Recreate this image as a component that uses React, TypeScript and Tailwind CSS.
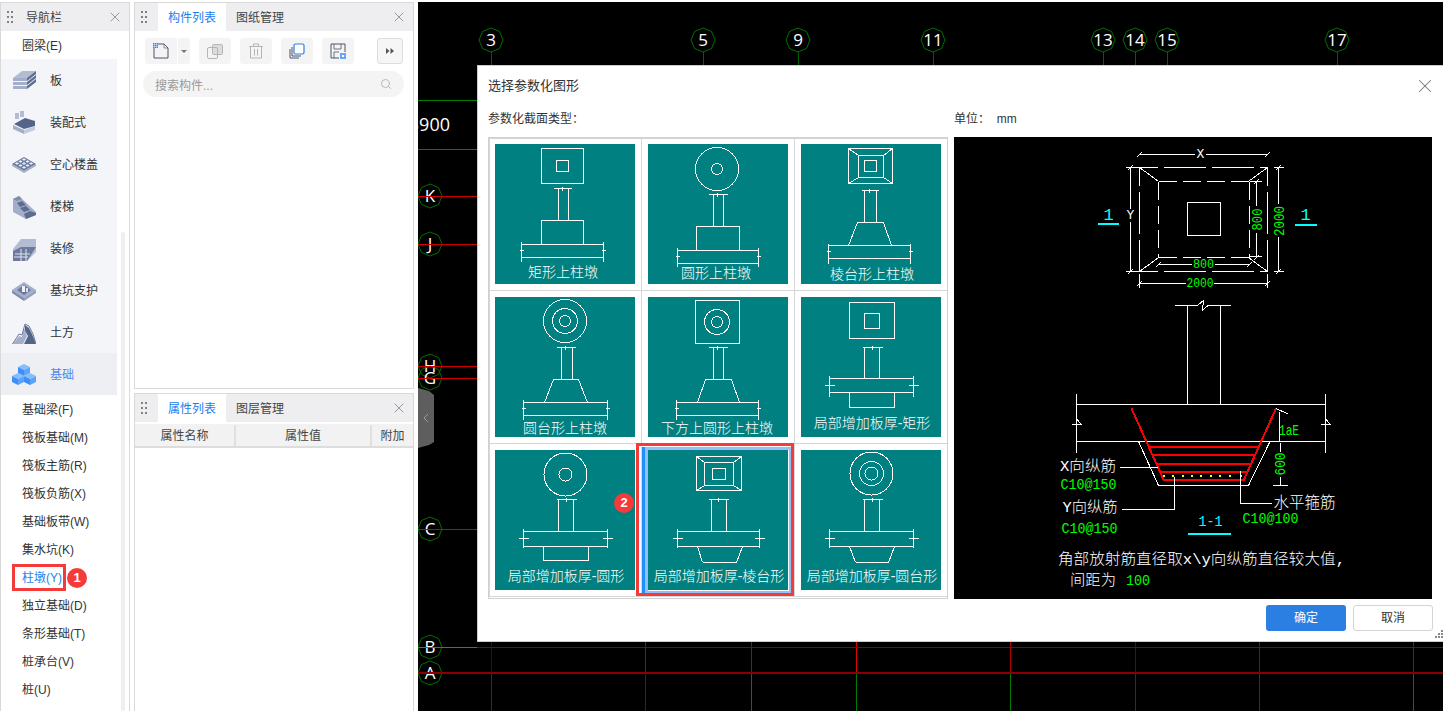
import type { ReactNode } from "react"
import { X, Search } from "lucide-react"

const px = (v: number) => Math.floor(v) + 0.5

function Ln({ a, b, c, d }: { a: number; b: number; c: number; d: number }) {
  return <line x1={px(a)} y1={px(b)} x2={px(c)} y2={px(d)} />
}

function Box({ l, t, r, b }: { l: number; t: number; r: number; b: number }) {
  return <rect x={px(l)} y={px(t)} width={Math.round(r - l)} height={Math.round(b - t)} />
}

function DragDots() {
  return (
    <div className="grid w-[6px] grid-cols-2 gap-x-[2px] gap-y-[3px]">
      {[0, 1, 2, 3, 4, 5].map((i) => (
        <span key={i} className="h-[2px] w-[2px] bg-[#808080]" />
      ))}
    </div>
  )
}

function cube(cx: number, cy: number, s: number) {
  return (
    <g key={`${cx}-${cy}`}>
      <polygon points={`${cx},${cy - s} ${cx + s},${cy - s / 2} ${cx},${cy} ${cx - s},${cy - s / 2}`} fill="#86bdfd" />
      <polygon points={`${cx - s},${cy - s / 2} ${cx},${cy} ${cx},${cy + s} ${cx - s},${cy + s / 2}`} fill="#3b8ff5" />
      <polygon points={`${cx + s},${cy - s / 2} ${cx},${cy} ${cx},${cy + s} ${cx + s},${cy + s / 2}`} fill="#5ba4fa" />
    </g>
  )
}

const navIcons: Record<string, ReactNode> = {
  板: (
    <>
      <polygon points="1,9 10,2 24,2 15,9" fill="#b3bcd3" />
      <rect x="1" y="9" width="14" height="3" fill="#a3aec9" />
      <rect x="1" y="13" width="14" height="3" fill="#a3aec9" />
      <rect x="1" y="17" width="14" height="3" fill="#a3aec9" />
      <polygon points="15,9 24,2 24,5 15,12" fill="#5d6c90" />
      <polygon points="15,13 24,6 24,9 15,16" fill="#5d6c90" />
      <polygon points="15,17 24,10 24,13 15,20" fill="#5d6c90" />
    </>
  ),
  装配式: (
    <>
      <rect x="3" y="2" width="4" height="6" fill="#b3bcd3" />
      <rect x="8" y="0" width="4" height="6" fill="#b3bcd3" />
      <polygon points="2,13 13,7 23,10 23,15 12,18" fill="#55658a" />
      <polygon points="1,14 12,19 12,23 1,18" fill="#a3aec9" />
      <polygon points="23,15 12,19 12,23 23,19" fill="#c4cbde" />
    </>
  ),
  空心楼盖: (
    <>
      <polygon points="0,11 12,4 24,11 12,18" fill="#6b7a9c" />
      <polygon points="0,11 12,18 12,20 0,13" fill="#a3aec9" />
      <polygon points="24,11 12,18 12,20 24,13" fill="#a3aec9" />
      {[
        [12, 6.5],
        [8.5, 8.5],
        [15.5, 8.5],
        [5, 10.5],
        [12, 10.5],
        [19, 10.5],
        [8.5, 12.5],
        [15.5, 12.5],
        [12, 14.5],
      ].map(([x, y]) => (
        <polygon key={`${x}-${y}`} points={`${x},${y - 1.2} ${x + 2.2},${y} ${x},${y + 1.2} ${x - 2.2},${y}`} fill="#eef0f6" />
      ))}
    </>
  ),
  楼梯: (
    <>
      <polygon points="1,4 7,1 24,17 24,20 14,24 1,17" fill="#a3aec9" />
      <polygon points="7,1 10,4 5,6 1,4" fill="#7f8cad" />
      <polygon points="10,6 14,10 8,12 5,8" fill="#5d6c90" />
      <polygon points="14,11 18,15 12,17 8,13" fill="#5d6c90" />
      <polygon points="18,16 24,18 24,20 14,24 12,19" fill="#5d6c90" />
    </>
  ),
  装修: (
    <>
      <polygon points="1,12 9,2 24,2 24,15 15,24 1,24" fill="#b3bcd3" />
      <polygon points="1,14 9,10 24,10 15,24 1,24" fill="#6b7a9c" />
      <path d="M3 17H18M2 20H16M9 12V24M14 12V24" stroke="#dfe3ee" strokeWidth="1" />
    </>
  ),
  基坑支护: (
    <>
      <polygon points="0,11 12,3 24,11 12,19" fill="#a3aec9" />
      <polygon points="0,11 12,19 12,22 0,14" fill="#7f8cad" />
      <polygon points="24,11 12,19 12,22 24,14" fill="#939fbc" />
      <polygon points="5,11 12,6 19,11 12,16" fill="#6b7a9c" />
      <rect x="10" y="7" width="3" height="6" fill="#eef0f6" />
      <rect x="14" y="9" width="2" height="4" fill="#dfe3ee" />
    </>
  ),
  土方: (
    <>
      <polygon points="13,4 17,7 20,13 24,23 12,23 16,15 13,10" fill="#55658a" />
      <polygon points="1,23 7,15 10,16 12,7 15,15 11,23" fill="#a3aec9" />
      <path d="M0.5 23 L7 13 L10 14 L13 3 L17 5 L21 13 L24 23" fill="none" stroke="#6b7a9c" strokeWidth="1" />
    </>
  ),
  基础: (
    <>
      {cube(12, 7, 6)}
      {cube(6, 16, 6)}
      {cube(18, 16, 6)}
    </>
  ),
}

const categories = ["板", "装配式", "空心楼盖", "楼梯", "装修", "基坑支护", "土方", "基础"]
const subItems = [
  "基础梁(F)",
  "筏板基础(M)",
  "筏板主筋(R)",
  "筏板负筋(X)",
  "基础板带(W)",
  "集水坑(K)",
  "柱墩(Y)",
  "独立基础(D)",
  "条形基础(T)",
  "桩承台(V)",
  "桩(U)",
]

function Badge({ n, className }: { n: number; className: string }) {
  return (
    <span className={`absolute flex h-[20px] w-[20px] items-center justify-center rounded-full bg-[#f53a3a] text-[13px] font-bold text-white ${className}`}>
      {n}
    </span>
  )
}

function NavPanel() {
  return (
    <aside className="relative flex w-[130px] shrink-0 flex-col overflow-hidden border border-b-0 border-[#d9d9d9] bg-white">
      <div className="flex h-[28px] shrink-0 items-center bg-[#eeeef0] pl-[6px] text-[#444]">
        <DragDots />
        <span className="ml-[13px] pt-[2px]">导航栏</span>
        <X size={16} strokeWidth={1.5} className="ml-auto mr-[6px] text-[#999]" />
      </div>
      <div className="flex h-[28px] shrink-0 items-center pl-[21px] pt-[2px] text-[#333]">圈梁(E)</div>
      <div className="w-[116px] bg-[#f4f5f9]">
        {categories.map((c) => (
          <div key={c} className={`flex h-[42px] items-center pl-[11px] pt-[2px] ${c === "基础" ? "bg-[#eeeff3] text-[#4f86ef]" : "text-[#333]"}`}>
            <svg viewBox="0 0 24 24" className="h-[24px] w-[24px]">
              {navIcons[c]}
            </svg>
            <span className="ml-[14px]">{c}</span>
          </div>
        ))}
      </div>
      <div className="mt-px">
        {subItems.map((s) => (
          <div key={s} className={`relative flex h-[28px] items-center pl-[21px] ${s === "柱墩(Y)" ? "text-[#1a86f0]" : "text-[#333]"}`}>
            {s}
            {s === "柱墩(Y)" && (
              <>
                <span className="absolute left-[11px] top-0 h-[27px] w-[54px] border-[3px] border-[#f53a3a]" />
                <Badge n={1} className="left-[66px] top-[4px]" />
              </>
            )}
          </div>
        ))}
      </div>
      <div className="absolute bottom-0 left-[120px] top-[229px] w-[4px] rounded-sm bg-[#efefef]" />
    </aside>
  )
}

function PanelHeader({ tabs }: { tabs: [string, string] }) {
  return (
    <div className="flex h-[28px] shrink-0 items-center bg-[#eeeef0] pl-[6px]">
      <DragDots />
      <div className="ml-[11px] flex h-full w-[68px] items-center justify-center bg-white pt-[2px] text-[#1a80f0]">{tabs[0]}</div>
      <span className="ml-[10px] pt-[2px] text-[#444]">{tabs[1]}</span>
      <X size={16} strokeWidth={1.5} className="ml-auto mr-[6px] text-[#999]" />
    </div>
  )
}

function ToolButton({ children, className = "" }: { children: ReactNode; className?: string }) {
  return <div className={`flex h-[26px] w-[32px] items-center justify-center rounded-[3px] bg-[#f4f4f5] ${className}`}>{children}</div>
}

function ComponentPanel() {
  return (
    <section className="flex h-[387px] flex-col border border-[#d9d9d9] bg-white">
      <PanelHeader tabs={["构件列表", "图纸管理"]} />
      <div className="mt-[7px] flex pl-[10px]">
        <ToolButton className="rounded-r-none">
          <svg width="16" height="16" viewBox="0 0 16 16" fill="none">
            <path d="M1 5V15H15V5L11 1H5" stroke="#4a5568" strokeWidth="1" />
            <path d="M11 1V5H15" stroke="#4a5568" strokeWidth="0.6" />
            <rect x="0" y="0" width="5" height="5" fill="#3b82e8" />
            <path d="M1.5 0V5M3.5 0V5M0 1.5H5M0 3.5H5" stroke="#cfe2fb" strokeWidth="0.6" />
          </svg>
        </ToolButton>
        <div className="ml-px flex h-[26px] w-[12px] items-center justify-center rounded-r-[3px] bg-[#f4f4f5]">
          <span className="h-0 w-0 border-x-[3px] border-t-[3px] border-x-transparent border-t-[#777]" />
        </div>
        <ToolButton className="ml-[9px]">
          <svg width="16" height="16" viewBox="0 0 16 16" fill="none" stroke="#b5b5b5">
            <rect x="5.5" y="1.5" width="10" height="10" rx="1" fill="#dcdcdc" />
            <rect x="0.5" y="4.5" width="10" height="11" rx="1.5" />
          </svg>
        </ToolButton>
        <ToolButton className="ml-[9px]">
          <svg width="16" height="16" viewBox="0 0 16 16" fill="none" stroke="#b5b5b5">
            <path d="M1 3.5H15M5.5 3.5V1H10.5V3.5M2.5 3.5V15H13.5V3.5M6.5 6V12.5M9.5 6V12.5" />
          </svg>
        </ToolButton>
        <ToolButton className="ml-[9px]">
          <svg width="16" height="16" viewBox="0 0 16 16" fill="none">
            <path d="M1 6V15H10M3 4V13H12" stroke="#4a5568" />
            <rect x="5" y="1" width="10" height="10" rx="1.5" stroke="#2b7fe3" strokeWidth="1.2" fill="#fff" />
          </svg>
        </ToolButton>
        <ToolButton className="ml-[9px]">
          <svg width="16" height="16" viewBox="0 0 16 16" fill="none">
            <path d="M9 15H1V1H15V9" stroke="#4a5568" />
            <path d="M4 1V6H11V1M4 15V9H9" stroke="#4a5568" strokeWidth="0.8" />
            <rect x="10" y="10" width="6" height="6" fill="#6ba6ef" />
            <rect x="12" y="12" width="2" height="2" fill="#fff" />
          </svg>
        </ToolButton>
        <div className="ml-[23px] flex h-[26px] w-[26px] items-center justify-center rounded-[3px] border border-[#ddd] bg-[#f6f6f6]">
          <svg width="8" height="6" viewBox="0 0 8 6" fill="#555">
            <polygon points="0,0 3.5,3 0,6" />
            <polygon points="4.5,0 8,3 4.5,6" />
          </svg>
        </div>
      </div>
      <div className="ml-[8px] mt-[7px] flex h-[26px] w-[261px] items-center rounded-full bg-[#f4f4f5] px-[12px] text-[#999]">
        <span className="pt-[3px]">搜索构件...</span>
        <Search size={12} strokeWidth={1.6} className="ml-auto text-[#aaa]" />
      </div>
    </section>
  )
}

function PropertyPanel() {
  return (
    <section className="mt-[4px] flex flex-1 flex-col border border-b-0 border-[#d9d9d9] bg-white">
      <PanelHeader tabs={["属性列表", "图层管理"]} />
      <div className="mt-[2px] flex h-[24px] border-b-2 border-[#dddddd] bg-[#f2f2f3] pt-[1px] text-[#444]">
        <div className="flex w-[101px] items-center justify-center border-r-2 border-[#e0e0e0]">属性名称</div>
        <div className="flex w-[136px] items-center justify-center border-r-2 border-[#e0e0e0]">属性值</div>
        <div className="flex flex-1 items-center justify-center">附加</div>
      </div>
    </section>
  )
}

function octagon(cx: number, cy: number, r: number) {
  const pts: string[] = []
  for (let i = 0; i < 8; i++) {
    const a = -Math.PI / 2 + (i * Math.PI) / 4
    pts.push(`${(cx + r * Math.cos(a)).toFixed(1)},${(cy + r * Math.sin(a)).toFixed(1)}`)
  }
  return pts.join(" ")
}

const topAxes = [
  [491, "3"],
  [703, "5"],
  [798, "9"],
  [933, "11"],
  [1103, "13"],
  [1135, "14"],
  [1167, "15"],
  [1337, "17"],
] as const
const leftAxes = [
  [196, "K"],
  [244, "J"],
  [366, "H"],
  [378, "G"],
  [529, "C"],
  [647, "B"],
  [673, "A"],
] as const
const gridLines = [
  [491, "#3d0c0c", "#1f3a1f"],
  [645, "#333333", "#2a2a2a"],
  [751, "#b00000", "#007a00"],
  [856, "#e00000", "#007a00"],
  [1010, "#b00000", "#007a00"],
  [1135, "#5a0a0a", "#1f3a1f"],
  [1259, "#3a2a2a", "#2a3a2a"],
  [1413, "#b00000", "#007a00"],
] as const

function CadCanvas() {
  return (
    <svg viewBox="418 2 1025 709" className="absolute inset-0 h-full w-full">
      <g strokeWidth="1" shapeRendering="crispEdges">
        <line x1="418" y1="100.5" x2="477" y2="100.5" stroke="#008000" />
        <line x1="418" y1="149.5" x2="477" y2="149.5" stroke="#008000" />
        {gridLines.map(([x, red, green]) => (
          <g key={x}>
            <line x1={x + 0.5} y1="642" x2={x + 0.5} y2="673" stroke={red} />
            <line x1={x + 0.5} y1="673" x2={x + 0.5} y2="711" stroke={green} />
          </g>
        ))}
        {topAxes.map(([x, n]) => (
          <line key={n} x1={x + 0.5} y1="52" x2={x + 0.5} y2="66" stroke="#005f00" />
        ))}
      </g>
      {topAxes.map(([x, n]) => (
        <g key={n}>
          <polygon points={octagon(x, 40, 12)} fill="none" stroke="#007000" />
          <text x={x} y={46} textAnchor="middle" fill="#fff" fontSize="17" className="font-['Open_Sans',sans-serif]">
            {n}
          </text>
        </g>
      ))}
      {leftAxes.map(([y, n]) => (
        <g key={n}>
          <polygon points={octagon(430, y, 12)} fill="none" stroke="#007000" />
          <text x={430} y={y + 6} textAnchor="middle" fill="#fff" fontSize="17" className="font-['Open_Sans',sans-serif]">
            {n}
          </text>
        </g>
      ))}
      <text x={450} y={131} textAnchor="end" fill="#fff" fontSize="18" className="font-['Open_Sans',sans-serif]">
        3900
      </text>
      <g shapeRendering="crispEdges">
        {leftAxes.slice(0, 5).map(([y, n]) => (
          <line key={n} x1="418" y1={y + 0.5} x2="477" y2={y + 0.5} stroke="#d00000" />
        ))}
        <line x1="418" y1="647.5" x2="477" y2="647.5" stroke="#ff2020" />
        <line x1="477" y1="647.5" x2="1443" y2="647.5" stroke="#8b0000" />
        <rect x="418" y="672" width="1025" height="2" fill="#8b0000" />
      </g>
      <polygon points="418,388 429,391 434,395 434,442 429,445 418,448" fill="#5e5e5e" />
      <path d="M428 414 L424 418 L428 422" fill="none" stroke="#9c9c9c" />
    </svg>
  )
}

type StemProps = {
  dim: [number, number, number]
  col: [number, number, number]
  slab: [number, number, number, number]
  tick: [number, number]
  long?: boolean
}

function Stem({ dim, col, slab, tick, long }: StemProps) {
  const mid = (slab[2] + slab[3]) / 2
  const t = long ? 5 : 2
  const center = (dim[0] + dim[1]) / 2
  return (
    <>
      <Ln a={dim[0]} b={dim[2]} c={dim[1]} d={dim[2]} />
      <Ln a={center} b={dim[2] - 2} c={center} d={dim[2] + 2} />
      <Ln a={col[0]} b={dim[2]} c={col[0]} d={col[2]} />
      <Ln a={col[1]} b={dim[2]} c={col[1]} d={col[2]} />
      <Ln a={slab[0]} b={slab[2]} c={slab[1]} d={slab[2]} />
      <Ln a={slab[0]} b={slab[3]} c={slab[1]} d={slab[3]} />
      <Ln a={slab[0]} b={tick[0]} c={slab[0]} d={tick[1]} />
      <Ln a={slab[1]} b={tick[0]} c={slab[1]} d={tick[1]} />
      <Ln a={slab[0] - t} b={mid} c={slab[0] + t} d={mid} />
      <Ln a={slab[1] - t} b={mid} c={slab[1] + t} d={mid} />
    </>
  )
}

function Trap({ tl, tr, bl, br, t, b }: { tl: number; tr: number; bl: number; br: number; t: number; b: number }) {
  return (
    <>
      <Ln a={tl} b={t} c={tr} d={t} />
      <Ln a={tl} b={t} c={bl} d={b} />
      <Ln a={tr} b={t} c={br} d={b} />
      <Ln a={bl} b={b} c={br} d={b} />
    </>
  )
}

function Frustum({ o, m, i }: { o: [number, number, number, number]; m: [number, number, number, number]; i: [number, number, number, number] }) {
  return (
    <>
      <Box l={o[0]} t={o[1]} r={o[2]} b={o[3]} />
      <Box l={m[0]} t={m[1]} r={m[2]} b={m[3]} />
      <Box l={i[0]} t={i[1]} r={i[2]} b={i[3]} />
      <Ln a={o[0]} b={o[1]} c={m[0]} d={m[1]} />
      <Ln a={o[2]} b={o[1]} c={m[2]} d={m[1]} />
      <Ln a={o[0]} b={o[3]} c={m[0]} d={m[3]} />
      <Ln a={o[2]} b={o[3]} c={m[2]} d={m[3]} />
    </>
  )
}

type TileData = { label: string; x: number; y: number; art: ReactNode }

const tiles: TileData[] = [
  {
    label: "矩形上柱墩",
    x: 68,
    y: 128,
    art: (
      <>
        <Box l={46} t={4} r={88} b={39} />
        <Box l={61} t={16} r={73} b={27} />
        <Box l={46} t={76} r={88} b={100} />
        <Stem dim={[58, 76, 44]} col={[63, 73, 76]} slab={[26, 108, 100, 113]} tick={[97, 117]} />
      </>
    ),
  },
  {
    label: "圆形上柱墩",
    x: 68,
    y: 129,
    art: (
      <>
        <circle cx="69" cy="25" r="21.5" />
        <circle cx="69" cy="25" r="5.5" />
        <Box l={48} t={82} r={91} b={106} />
        <Stem dim={[60, 79, 50]} col={[65, 75, 82]} slab={[29, 110, 106, 119]} tick={[103, 122]} />
      </>
    ),
  },
  {
    label: "棱台形上柱墩",
    x: 71,
    y: 130,
    art: (
      <>
        <Frustum o={[47, 4, 91, 39]} m={[57, 11, 82, 33]} i={[63, 16, 75, 27]} />
        <Trap tl={56} tr={82} bl={47} br={90} t={78} b={101} />
        <Stem dim={[60, 77, 46]} col={[63, 75, 78]} slab={[27, 109, 101, 114]} tick={[99, 119]} />
      </>
    ),
  },
  {
    label: "圆台形上柱墩",
    x: 70,
    y: 131,
    art: (
      <>
        <circle cx="70" cy="24" r="21.5" />
        <circle cx="70" cy="24" r="12.5" />
        <circle cx="70" cy="24" r="5.5" />
        <Trap tl={58} tr={83} bl={49} br={92} t={82} b={105} />
        <Stem dim={[61, 80, 50]} col={[66, 77, 82]} slab={[28, 112, 105, 118]} tick={[102, 122]} />
      </>
    ),
  },
  {
    label: "下方上圆形上柱墩",
    x: 69,
    y: 131,
    art: (
      <>
        <Box l={47} t={3} r={91} b={46} />
        <circle cx="69" cy="25" r="12.5" />
        <circle cx="69" cy="25" r="5.5" />
        <Trap tl={57} tr={83} bl={49} br={91} t={82} b={105} />
        <Stem dim={[60, 79, 50]} col={[65, 75, 82]} slab={[28, 110, 105, 118]} tick={[102, 122]} />
      </>
    ),
  },
  {
    label: "局部增加板厚-矩形",
    x: 71,
    y: 126,
    art: (
      <>
        <Box l={48} t={5} r={93} b={41} />
        <Box l={63} t={16} r={78} b={31} />
        <Box l={48} t={95} r={93} b={110} />
        <Stem dim={[61, 81, 50]} col={[63, 78, 81]} slab={[28, 112, 81, 95]} tick={[78, 99]} long />
      </>
    ),
  },
  {
    label: "局部增加板厚-圆形",
    x: 71,
    y: 126,
    art: (
      <>
        <circle cx="70.5" cy="24.5" r="21.5" />
        <circle cx="70.5" cy="24.5" r="6.5" />
        <Box l={48} t={96} r={93} b={110} />
        <Stem dim={[61, 81, 49]} col={[63, 78, 81]} slab={[28, 112, 81, 96]} tick={[78, 97]} long />
      </>
    ),
  },
  {
    label: "局部增加板厚-棱台形",
    x: 71,
    y: 126,
    art: (
      <>
        <Frustum o={[48, 6, 93, 40]} m={[56, 12, 85, 35]} i={[64, 18, 77, 29]} />
        <Trap tl={49} tr={94} bl={54} br={88} t={96} b={112} />
        <Stem dim={[60, 80, 49]} col={[63, 78, 81]} slab={[29, 111, 81, 96]} tick={[78, 97]} long />
      </>
    ),
  },
  {
    label: "局部增加板厚-圆台形",
    x: 71,
    y: 126,
    art: (
      <>
        <circle cx="70.5" cy="23.5" r="21.5" />
        <circle cx="70.5" cy="23.5" r="12" />
        <circle cx="70.5" cy="23.5" r="6.5" />
        <Trap tl={48} tr={93} bl={54} br={87} t={96} b={112} />
        <Stem dim={[61, 81, 49]} col={[63, 78, 81]} slab={[28, 112, 81, 96]} tick={[78, 97]} long />
      </>
    ),
  },
]

function Tile({ tile, selected }: { tile: TileData; selected: boolean }) {
  return (
    <div className="flex items-end justify-end bg-white pb-[6px] pr-[6px]">
      <div className="relative h-[140px] w-[140px] bg-[#008080]">
        <svg viewBox="0 0 140 140" className="h-[140px] w-[140px]" fill="none" stroke="#fff" strokeWidth="1" shapeRendering="crispEdges">
          {tile.art}
          <text x={tile.x} y={tile.y} textAnchor="middle" dominantBaseline="central" fill="#fff" stroke="none" fontSize="14" fontWeight="300" shapeRendering="auto">
            {tile.label}
          </text>
        </svg>
        {selected && (
          <>
            <span className="absolute -bottom-[4px] -left-[3px] -right-[4px] -top-[3px] border-[3px] border-[#93c0f8]" />
            <span className="absolute -bottom-[4px] -left-[6px] -top-[3px] w-[3px] bg-[#1e90ff]" />
            <span className="absolute -bottom-[6px] -left-[12px] -right-[6px] -top-[7px] border-[3px] border-[#f53a3a]" />
            <Badge n={2} className="-left-[34px] top-[43px]" />
          </>
        )}
      </div>
    </div>
  )
}

const mono = "font-['Liberation_Mono','Noto_Sans_CJK_SC',monospace]"

function CadText({ x, y, fill = "#fff", size = 13, len, rotate, children }: {
  x: number
  y: number
  fill?: string
  size?: number
  len?: number
  rotate?: boolean
  children: ReactNode
}) {
  return (
    <text
      x={x}
      y={y}
      fill={fill}
      stroke="none"
      fontSize={size}
      fontWeight="300"
      textAnchor="middle"
      dominantBaseline="central"
      textLength={len}
      lengthAdjust="spacingAndGlyphs"
      transform={rotate ? `rotate(-90 ${x} ${y})` : undefined}
      className={mono}
    >
      {children}
    </text>
  )
}

const dimTicks: [number, number][] = [
  [1139, 154],
  [1267, 154],
  [1130, 167],
  [1130, 271],
  [1139, 283],
  [1267, 283],
  [1158, 264],
  [1249, 264],
  [1256, 181],
  [1256, 257],
  [1278, 167],
  [1278, 271],
]

const stirrups: [number, number, number][] = [
  [447, 1149, 1258],
  [455, 1153, 1254],
  [464, 1156, 1251],
  [472, 1160, 1247],
]

const rebarDots = [1164, 1173, 1183, 1192, 1201, 1211, 1220, 1230, 1241]

function Preview() {
  return (
    <svg viewBox="954 137 478 462" className="ml-[6px] h-[462px] w-[478px] bg-black" fill="none" stroke="#fff" strokeWidth="1" shapeRendering="crispEdges">
      <g strokeDasharray="42 6" strokeDashoffset="24">
        <path d="M1139.5 167.5H1267.5M1139.5 271.5H1267.5M1139.5 167.5V271.5M1267.5 167.5V271.5" />
      </g>
      <g strokeDasharray="18 6">
        <path d="M1158.5 181.5H1249.5M1158.5 257.5H1249.5M1158.5 181.5V257.5M1249.5 181.5V257.5" />
      </g>
      <rect x="1187.5" y="202.5" width="33" height="33" />
      <path d="M1139.5 167.5L1158 181M1267.5 167.5L1249 181M1139.5 271.5L1158 258M1267.5 271.5L1249 258" />
      <path d="M1139.5 154.5H1195M1206 154.5H1267.5M1130.5 167.5V209M1130.5 222V271.5M1126 167.5H1139M1126 271.5H1139" />
      <path d="M1139.5 283.5H1186M1214 283.5H1267.5M1139.5 274V288M1267.5 274V288" />
      <path d="M1158.5 264.5H1192M1215 264.5H1249.5" />
      <path d="M1256.5 181.5V206M1256.5 233V257.5M1250 181.5H1262M1250 256.5H1262" />
      <path d="M1278.5 167.5V204M1278.5 237V271.5M1274 167.5H1284M1274 271.5H1284" />
      {dimTicks.map(([x, y]) => (
        <line key={`${x}-${y}`} x1={x - 2} y1={y + 3} x2={x + 3} y2={y - 2} />
      ))}
      <CadText x={1200.5} y={154.5} size={13}>X</CadText>
      <CadText x={1130.5} y={215.5} size={13}>Y</CadText>
      <CadText x={1200} y={283.5} fill="#00ff00" size={13} len={27}>2000</CadText>
      <CadText x={1203.5} y={264.5} fill="#00ff00" size={13} len={21}>800</CadText>
      <CadText x={1258} y={219.5} fill="#00ff00" size={14} len={22} rotate>800</CadText>
      <CadText x={1280} y={221} fill="#00ff00" size={14} len={30} rotate>2000</CadText>
      <CadText x={1108.5} y={215} fill="#00ffff" size={17}>1</CadText>
      <CadText x={1305.5} y={215} fill="#00ffff" size={17}>1</CadText>
      <rect x="1098" y="223" width="21" height="2" fill="#00ffff" stroke="none" />
      <rect x="1295" y="224" width="22" height="2" fill="#00ffff" stroke="none" />

      <path d="M1175 305.5H1197.5L1203.5 300.5L1202.5 310L1208 305.5H1231" />
      <path d="M1187.5 305.5V404.5M1220.5 305.5V404.5" />
      <path d="M1076.5 394V453M1325.5 394V453M1076.5 404.5H1325.5M1076.5 441.5H1325.5" />
      <path d="M1072 424.5H1081L1077 419M1321 424.5H1330L1326 419" />
      <path d="M1138.5 441.5L1158.5 485.5H1248.5L1270 441.5" />

      <path d="M1131.5 408.5L1163.5 479.5H1244L1276 408.5" stroke="#ff0000" strokeWidth="2" />
      {stirrups.map(([y, l, r]) => (
        <rect key={y} x={l} y={y - 1} width={r - l} height="2" fill="#ff0000" stroke="none" />
      ))}
      {rebarDots.map((x) => (
        <rect key={x} x={x - 1} y="475" width="2" height="2" fill="#ffff00" stroke="none" />
      ))}

      <path d="M1120 467.5H1158M1122 509.5H1174.5V477M1240.5 471V503.5H1272" />
      <path d="M1276 408.5L1288 414M1279.5 412V441M1265 441.5H1282M1280.5 443V452M1280.5 477V485.5M1273 485.5H1288" />
      <CadText x={1289} y={430.5} fill="#00ff00" size={14} len={20}>1aE</CadText>
      <CadText x={1280.5} y={464} fill="#00ff00" size={14} len={23} rotate>600</CadText>

      <CadText x={1088} y={467.5} size={15} len={56}>X向纵筋</CadText>
      <CadText x={1088.5} y={485.5} fill="#00ff00" size={15} len={56}>C10@150</CadText>
      <CadText x={1090} y={508.5} size={15} len={55}>Y向纵筋</CadText>
      <CadText x={1089.5} y={529.5} fill="#00ff00" size={15} len={56}>C10@150</CadText>
      <CadText x={1304.5} y={503.5} size={15.5} len={62}>水平箍筋</CadText>
      <CadText x={1270.5} y={519.5} fill="#00ff00" size={15} len={56}>C10@100</CadText>
      <CadText x={1210.5} y={522.5} fill="#00ffff" size={15} len={24}>1-1</CadText>
      <rect x="1188" y="533" width="43" height="2" fill="#00ffff" stroke="none" />
      <CadText x={1201.5} y={560.5} size={15} len={287}>角部放射筋直径取x\y向纵筋直径较大值,</CadText>
      <CadText x={1093} y={581.5} size={15} len={46}>间距为</CadText>
      <CadText x={1138} y={581.5} fill="#00ff00" size={15} len={24}>100</CadText>
    </svg>
  )
}

function ParamDialog() {
  return (
    <div className="absolute left-[59px] top-[63px] flex h-[577px] w-[966px] flex-col border-y border-l border-[#cccccc] bg-white pl-[10px] text-[#333]">
      <div className="flex h-[39px] shrink-0 items-center text-[13px]">
        <span>选择参数化图形</span>
        <X size={22} strokeWidth={1.1} className="ml-auto mr-[7px] text-[#777]" />
      </div>
      <div className="flex h-[32px] shrink-0 pb-[4px]">
        <div className="flex w-[466px] items-center">参数化截面类型：</div>
        <div className="flex items-center">单位： &nbsp;mm</div>
      </div>
      <div className="flex">
        <div className="h-[462px] w-[460px] border border-[#d0d0d0] bg-white">
          <div className="grid grid-cols-[151px_152px_152px] grid-rows-[151px_152px_152px] gap-px bg-[#d6d6d6] pb-px pl-px pt-px">
            {tiles.map((t, i) => (
              <Tile key={t.label} tile={t} selected={i === 7} />
            ))}
          </div>
        </div>
        <Preview />
      </div>
      <div className="mr-[10px] mt-[6px] flex justify-end gap-[7px]">
        <button className="h-[26px] w-[80px] rounded-[3px] bg-[#2b7fe3] text-white">确定</button>
        <button className="h-[26px] w-[80px] rounded-[3px] border border-[#d4d4d4] bg-white text-[#333]">取消</button>
      </div>
      <svg viewBox="0 0 8 8" className="absolute bottom-[3px] right-0 h-[8px] w-[8px]" fill="#888">
        <rect x="6" y="0" width="2" height="2" />
        <rect x="3" y="3" width="2" height="2" />
        <rect x="6" y="3" width="2" height="2" />
        <rect x="0" y="6" width="2" height="2" />
        <rect x="3" y="6" width="2" height="2" />
        <rect x="6" y="6" width="2" height="2" />
      </svg>
    </div>
  )
}

export default function App() {
  return (
    <div className="flex h-[711px] w-[1443px] overflow-hidden bg-white pt-[2px] font-['Liberation_Sans','Noto_Sans_CJK_SC',sans-serif] text-[12px]">
      <NavPanel />
      <div className="ml-[4px] flex w-[280px] shrink-0 flex-col">
        <ComponentPanel />
        <PropertyPanel />
      </div>
      <main className="relative ml-[4px] flex-1 bg-black">
        <CadCanvas />
        <ParamDialog />
      </main>
    </div>
  )
}
